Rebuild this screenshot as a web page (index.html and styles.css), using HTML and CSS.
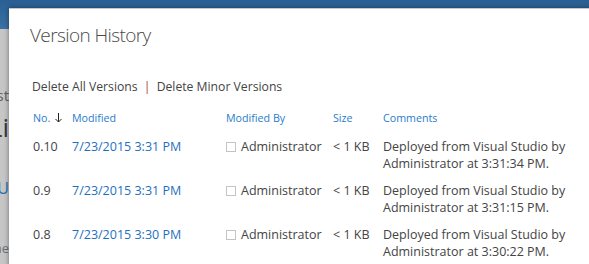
FILE: index.html
```html
<!DOCTYPE html>
<html lang="en">
<head>
    <meta charset="UTF-8">
    <meta name="viewport" content="width=device-width, initial-scale=1.0">
    <title>Version History</title>
    <link rel="stylesheet" href="styles.css">
</head>
<body>
    <div class="suite-bar"></div>
    <div class="page-behind">
        <div class="behind-line behind-small">Test</div>
        <div class="behind-line behind-big">Li</div>
        <div class="behind-line behind-link">CU</div>
        <div class="behind-line behind-tiny">ne</div>
    </div>

    <div class="dialog">
        <h1 class="dialog-title">Version History</h1>

        <div class="actions">
            <a class="action-link" href="#">Delete All Versions</a>
            <span class="separator">|</span>
            <a class="action-link" href="#">Delete Minor Versions</a>
        </div>

        <div class="versions">
            <div class="head">No.
                <svg class="sort-arrow" width="7" height="10" viewBox="0 0 7 10">
                    <path d="M3.5 0 V9 M0.5 6 L3.5 9 L6.5 6" fill="none" stroke="#222" stroke-width="1"/>
                </svg>
            </div>
            <div class="head">Modified</div>
            <div class="head">Modified By</div>
            <div class="head">Size</div>
            <div class="head">Comments</div>

            <div class="cell">0.10</div>
            <div class="cell date">7/23/2015 3:31 PM</div>
            <div class="cell user"><span class="presence"></span>Administrator</div>
            <div class="cell">&lt; 1 KB</div>
            <div class="cell">Deployed from Visual Studio by<br>Administrator at 3:31:34 PM.</div>

            <div class="cell">0.9</div>
            <div class="cell date">7/23/2015 3:31 PM</div>
            <div class="cell user"><span class="presence"></span>Administrator</div>
            <div class="cell">&lt; 1 KB</div>
            <div class="cell">Deployed from Visual Studio by<br>Administrator at 3:31:15 PM.</div>

            <div class="cell">0.8</div>
            <div class="cell date">7/23/2015 3:30 PM</div>
            <div class="cell user"><span class="presence"></span>Administrator</div>
            <div class="cell">&lt; 1 KB</div>
            <div class="cell">Deployed from Visual Studio by<br>Administrator at 3:30:22 PM.</div>
        </div>
    </div>
</body>
</html>
```

FILE: styles.css
```css
body {
    margin: 0;
    padding: 0;
    height: 264px;
    overflow: hidden;
    font-family: "Open Sans", "Noto Sans", Arial, sans-serif;
    background-color: #c6c6c6;
    position: relative;
}

.suite-bar {
    height: 29px;
    background: linear-gradient(#2a5f93, #3a72a6);
}

.page-behind {
    width: 9px;
    display: flex;
    flex-direction: column;
    align-items: flex-end;
    overflow: hidden;
    color: #606060;
}

.behind-line {
    white-space: nowrap;
}

.behind-small {
    margin-top: 56px;
    font-size: 15px;
}

.behind-big {
    margin-top: 4px;
    font-size: 26px;
    color: #3a3a3a;
}

.behind-link {
    margin-top: 32px;
    font-size: 16px;
    color: #2c6fb2;
}

.behind-tiny {
    margin-top: 40px;
    font-size: 13px;
    color: #707070;
}

.dialog {
    position: absolute;
    top: 8px;
    left: 9px;
    right: -30px;
    bottom: -30px;
    background-color: white;
    border-top: 1px solid #c8c8c8;
    box-shadow: 0 0 5px rgba(0, 0, 0, 0.45);
    padding: 0 0 0 21px;
    color: #444;
}

.dialog-title {
    margin: 12px 0 0 0;
    font-size: 19px;
    font-weight: 300;
    letter-spacing: -0.6px;
    line-height: 28px;
    color: #4a4a4a;
}

.actions {
    margin-top: 29px;
    padding-left: 2px;
    font-size: 12.2px;
    line-height: 18px;
}

.action-link {
    color: #444;
    text-decoration: none;
}

.separator {
    color: #a8453a;
    margin: 0 3px;
}

.versions {
    display: grid;
    grid-template-columns: 39px 154px 107px 50px auto;
    margin-top: 14px;
    padding-left: 3px;
}

.head {
    font-size: 10.7px;
    line-height: 16px;
    color: #2a7ccb;
    padding-bottom: 12px;
}

.sort-arrow {
    margin-left: 2px;
    vertical-align: -1px;
}

.cell {
    font-size: 12.5px;
    line-height: 17px;
    padding-bottom: 10px;
    color: #444;
}

.date {
    color: #1e6fc0;
}

.presence {
    display: inline-block;
    box-sizing: border-box;
    width: 10px;
    height: 10px;
    border: 1px solid #c4c4c4;
    margin-right: 5px;
    vertical-align: -1px;
}
```
